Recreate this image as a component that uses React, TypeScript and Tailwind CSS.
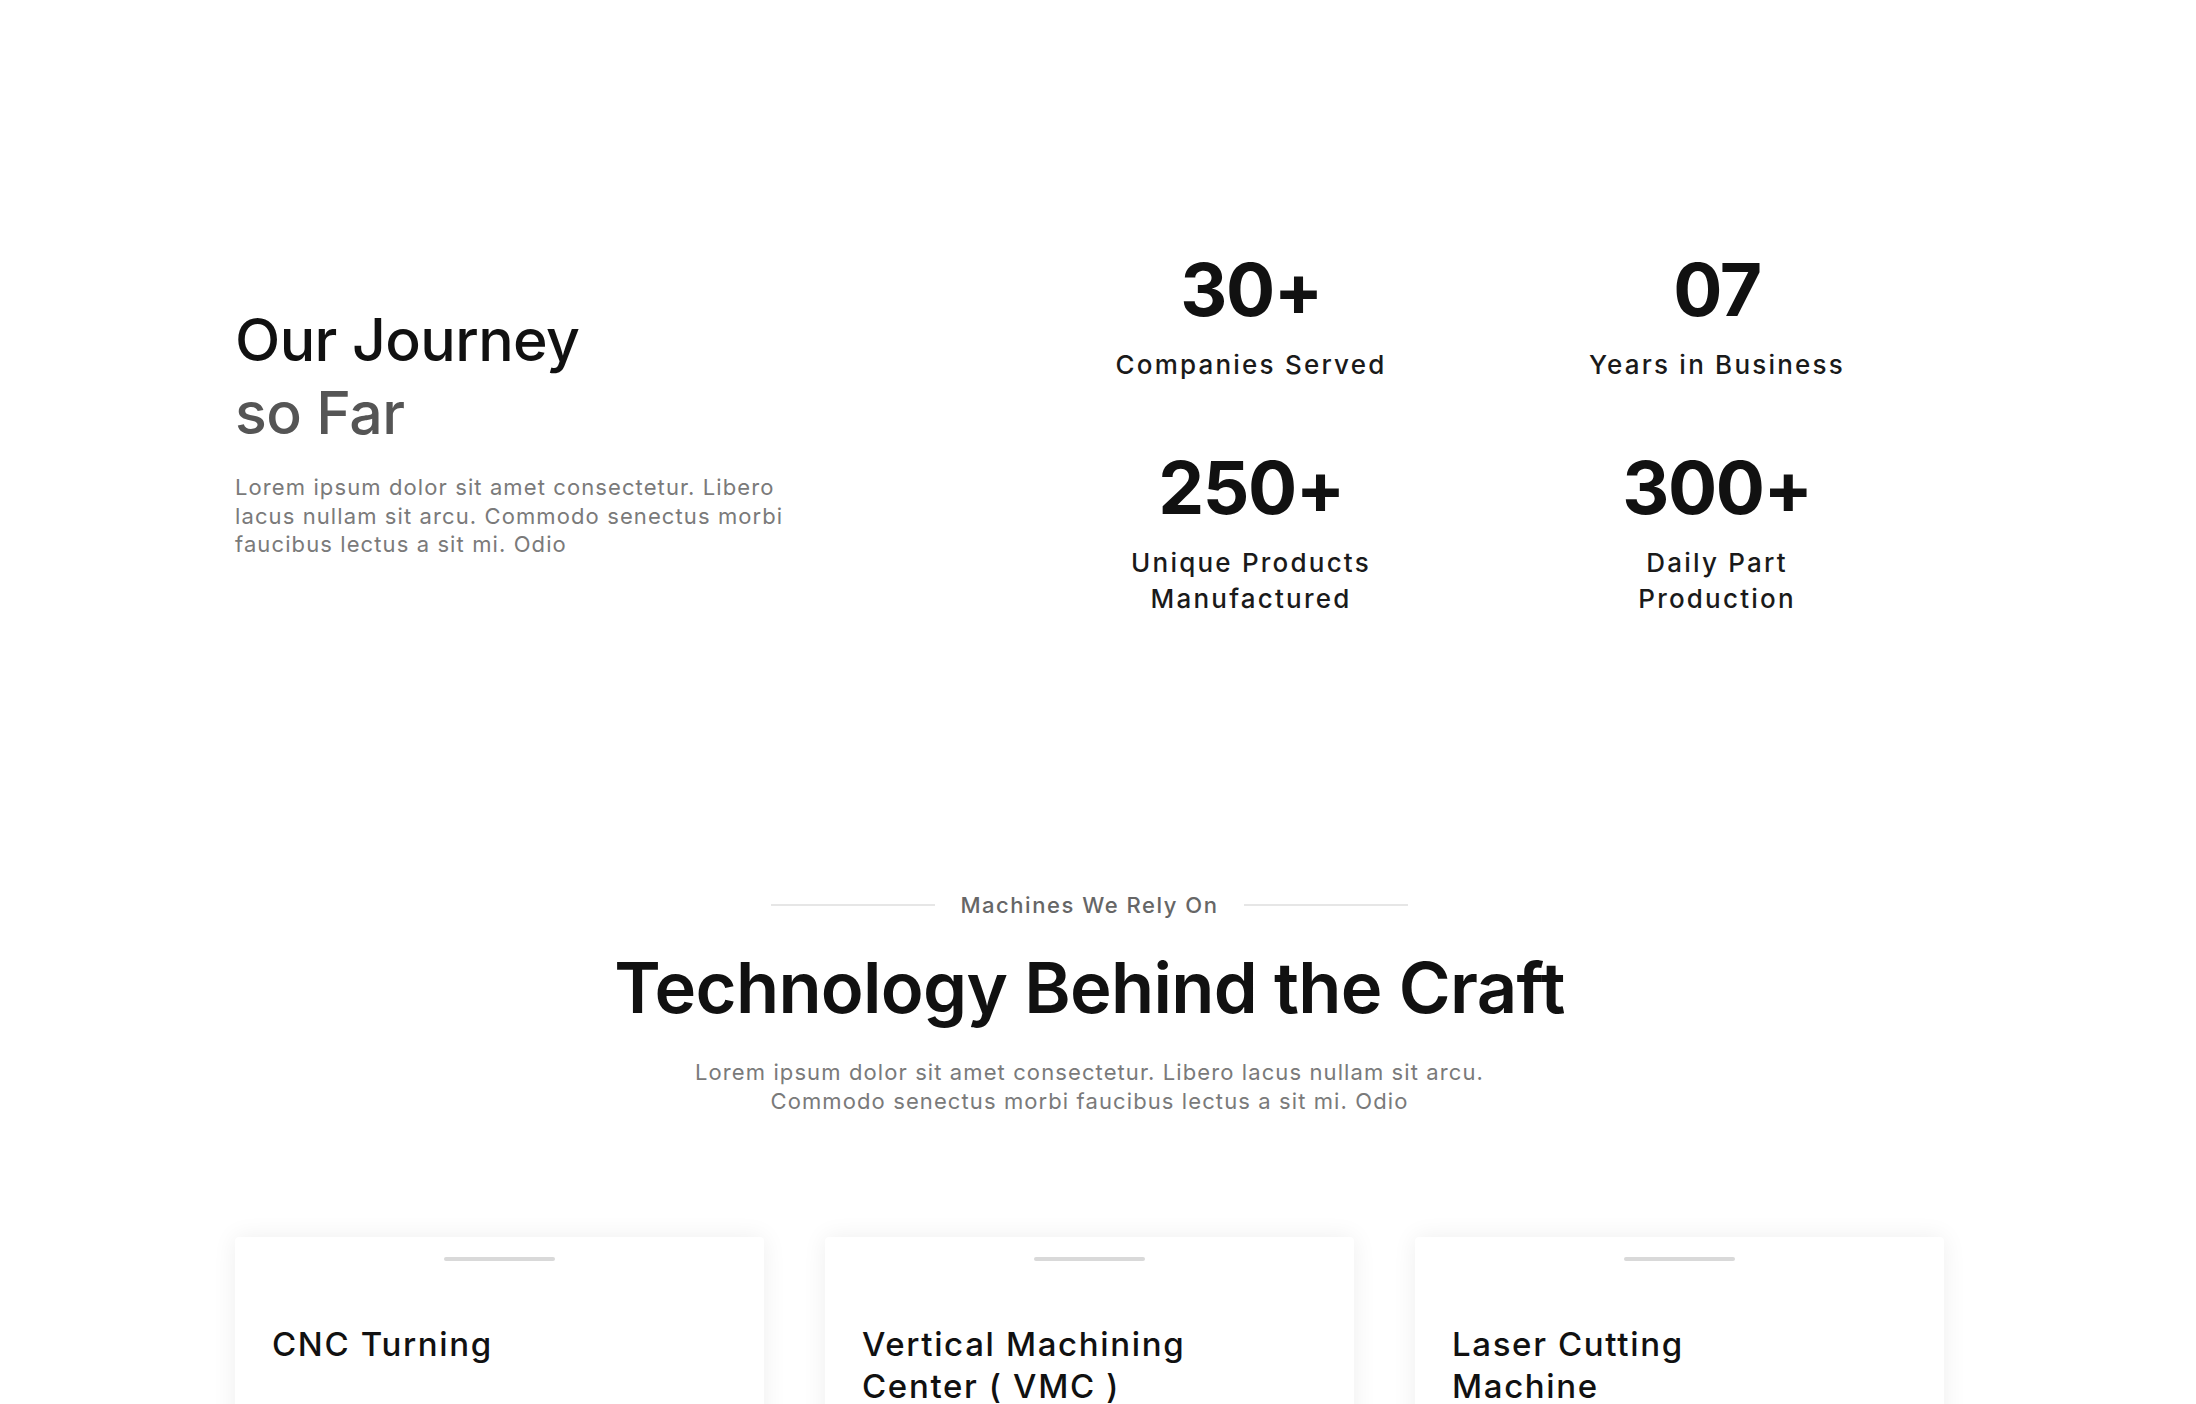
import React from "react";

const stats = [
  { value: "30+", label: ["Companies Served"] },
  { value: "07", label: ["Years in Business"] },
  { value: "250+", label: ["Unique Products", "Manufactured"] },
  { value: "300+", label: ["Daily Part", "Production"] },
];

const machines = [
  { title: "CNC Turning" },
  { title: "Vertical Machining Center ( VMC )" },
  { title: "Laser Cutting Machine" },
];

export default function App() {
  return (
    <div
      className="min-h-screen w-full bg-white text-[#111111]"
      style={{ fontFamily: "Inter, 'Noto Sans', sans-serif" }}
    >
      <div className="pl-[235px] pr-[252px]">
        {/* Journey section */}
        <section className="pt-[253px] flex items-center">
          <div className="w-[580px] -mt-[9px]">
            <h2 className="text-[59px] leading-[73px] font-medium tracking-[-0.01em]">
              <span className="block text-[#111111]">Our Journey</span>
              <span className="block text-[#555555]">so Far</span>
            </h2>
            <p className="mt-[24px] w-[570px] text-[22px] leading-[28.5px] tracking-[0.05em] text-[#7a7a7a]">
              Lorem ipsum dolor sit amet consectetur. Libero lacus nullam sit arcu. Commodo senectus morbi faucibus lectus a sit mi. Odio
            </p>
          </div>
          <div className="ml-auto -mr-[6px] grid w-[932px] grid-cols-2 gap-y-[67px]">
            {stats.map((s) => (
              <div key={s.value} className="flex flex-col items-center text-center">
                <div className="text-[73px] leading-none font-bold tracking-[-0.02em] text-[#111111]">
                  {s.value}
                </div>
                <div className="mt-[21px] text-[26px] leading-[36.5px] font-medium tracking-[0.085em] text-[#1a1a1a]">
                  {s.label.map((l) => (
                    <div key={l}>{l}</div>
                  ))}
                </div>
              </div>
            ))}
          </div>
        </section>

        {/* Machines section */}
        <section className="mt-[273px] flex flex-col items-center">
          <div className="flex items-center gap-[25px]">
            <span className="h-[2px] w-[164px] bg-[#e6e6e6]" />
            <span className="text-[22px] leading-[28px] font-medium tracking-[0.07em] text-[#666666]">
              Machines We Rely On
            </span>
            <span className="h-[2px] w-[164px] bg-[#e6e6e6]" />
          </div>
          <h2 className="mt-[34px] text-[70.5px] leading-none font-semibold tracking-[-0.01em] text-[#111111]">
            Technology Behind the Craft
          </h2>
          <p className="mt-[35px] w-[830px] text-center text-[22px] leading-[29px] tracking-[0.05em] text-[#7a7a7a]">
            Lorem ipsum dolor sit amet consectetur. Libero lacus nullam sit arcu. Commodo senectus morbi faucibus lectus a sit mi. Odio
          </p>

          <div className="mt-[121px] grid w-full grid-cols-3 gap-[61px]">
            {machines.map((m) => (
              <div
                key={m.title}
                className="h-[420px] rounded-[4px] bg-white px-[37px] pt-[20px] shadow-[0_0_24px_rgba(0,0,0,0.07)]"
              >
                <div className="mx-auto h-[4px] w-[111px] rounded-full bg-[#d9d9d9]" />
                <h3 className="mt-[62px] max-w-[370px] text-[33px] leading-[42px] font-medium tracking-[0.05em] text-[#111111]">
                  {m.title}
                </h3>
              </div>
            ))}
          </div>
        </section>
      </div>
    </div>
  );
}
